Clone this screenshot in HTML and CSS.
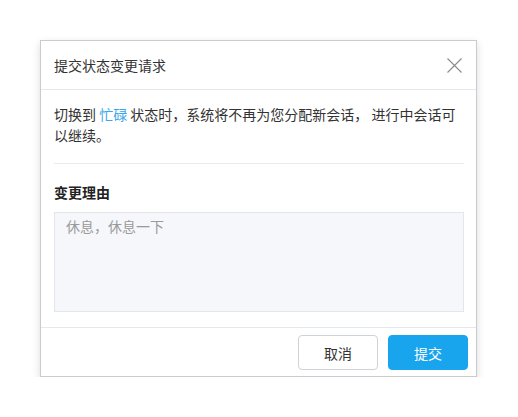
FILE: index.html
```html
<!DOCTYPE html>
<html lang="zh-CN">
<head>
<meta charset="utf-8">
<link rel="stylesheet" href="styles.css">
</head>
<body>
<div class="stage">
  <div class="dialog">
    <div class="dialog-header">
      <span class="dialog-title">提交状态变更请求</span>
      <button class="close-btn" aria-label="关闭">
        <svg width="15" height="15" viewBox="0 0 15 15"><path d="M0.5 0.5 L14.5 14.5 M14.5 0.5 L0.5 14.5" stroke="#8a8a8a" stroke-width="1.1" fill="none"/></svg>
      </button>
    </div>
    <div class="dialog-body">
      <p class="notice">切换到 <span class="status">忙碌</span> 状态时，系统将不再为您分配新会话， 进行中会话可以继续。</p>
      <div class="divider"></div>
      <div class="field-label">变更理由</div>
      <div class="reason-box">休息，休息一下</div>
    </div>
    <div class="dialog-footer">
      <button class="btn btn-cancel">取消</button>
      <button class="btn btn-primary">提交</button>
    </div>
  </div>
</div>
</body>
</html>
```

FILE: styles.css
```css
* { box-sizing: border-box; }
html, body {
  margin: 0;
  padding: 0;
  background: #ffffff;
}
body {
  font-family: "Noto Sans CJK SC", "Noto Sans", sans-serif;
  font-size: 14px;
  color: #333333;
}
.stage {
  padding: 40px 0 0 40px;
}
.dialog {
  width: 437px;
  border: 1px solid #c9cbce;
  background: #ffffff;
  box-shadow: 0 3px 8px rgba(0, 0, 0, 0.14);
}
.dialog-header {
  height: 49px;
  border-bottom: 1px solid #e3e8ee;
  display: flex;
  align-items: center;
  justify-content: space-between;
  padding: 0 14px 0 13px;
}
.dialog-title {
  font-size: 14px;
  color: #333333;
  line-height: 20px;
}
.close-btn {
  border: none;
  background: none;
  padding: 0;
  width: 15px;
  height: 15px;
  display: flex;
  margin-top: 1px;
}
.dialog-body {
  padding: 14px 12px 15px 13px;
}
.notice {
  margin: 0;
  line-height: 21px;
  word-spacing: 0;
  color: #333333;
}
.status {
  color: #3aa6ec;
}
.divider {
  height: 1px;
  background: #e6ebf0;
  margin: 17px 0 18px;
}
.field-label {
  font-weight: bold;
  line-height: 20px;
  color: #222222;
}
.reason-box {
  margin-top: 10px;
  height: 100px;
  background: #f5f7fa;
  border: 1px solid #e3e6ea;
  padding: 3px 11px;
  color: #9a9a9a;
  line-height: 20px;
}
.dialog-footer {
  border-top: 1px solid #e3e8ee;
  display: flex;
  justify-content: flex-end;
  gap: 10px;
  padding: 7px 8px 6px;
}
.btn {
  width: 80px;
  height: 35px;
  border-radius: 4px;
  font-family: inherit;
  font-size: 14px;
  padding: 0;
}
.btn-cancel {
  background: #ffffff;
  border: 1px solid #cfd2d6;
  color: #333333;
}
.btn-primary {
  background: #19a5ee;
  border: 1px solid #19a5ee;
  color: #ffffff;
}
```
